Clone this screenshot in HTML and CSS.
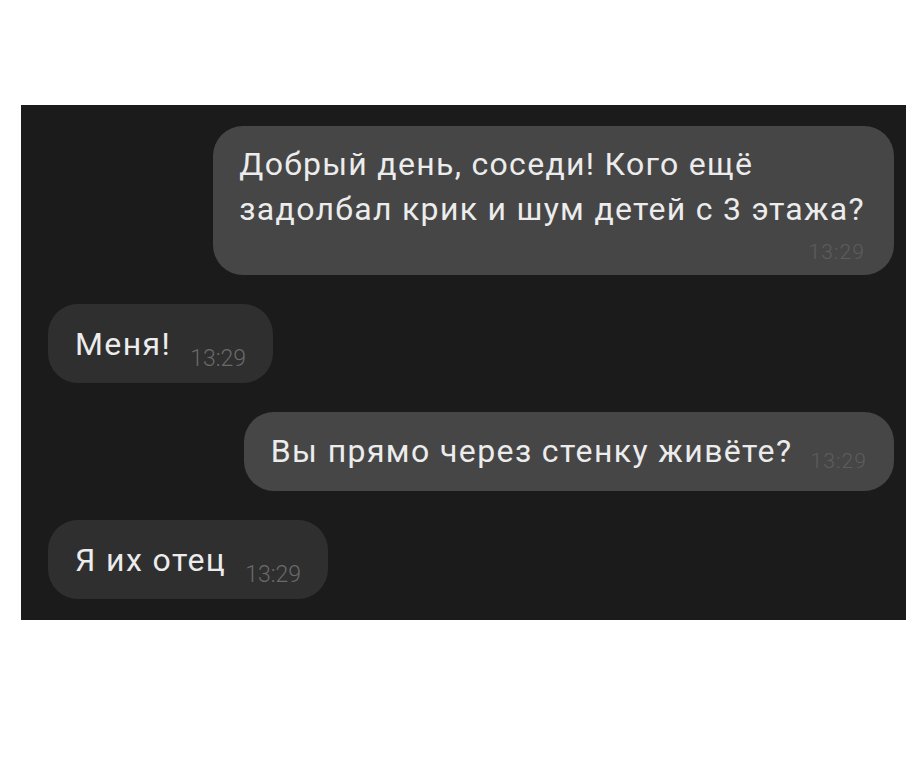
FILE: index.html
```html
<!DOCTYPE html>
<html lang="ru">
<head>
<meta charset="utf-8">
<link rel="stylesheet" href="styles.css">
</head>
<body>
<div class="chat">
  <div class="bubble out multi">
    <div class="text">Добрый день, соседи! Кого ещё<br>задолбал крик и шум детей с 3 этажа?</div>
    <div class="time">13:29</div>
  </div>
  <div class="bubble in">
    <span class="text">Меня!</span><span class="time">13:29</span>
  </div>
  <div class="bubble out">
    <span class="text">Вы прямо через стенку живёте?</span><span class="time">13:29</span>
  </div>
  <div class="bubble in">
    <span class="text">Я их отец</span><span class="time">13:29</span>
  </div>
</div>
</body>
</html>
```

FILE: styles.css
```css
html, body {
  margin: 0;
  padding: 0;
  background: #ffffff;
}

.chat {
  box-sizing: border-box;
  margin: 105px 0 0 21px;
  width: 885px;
  height: 515px;
  background: #1b1b1b;
  display: flex;
  flex-direction: column;
  gap: 29px;
  padding: 21px 12px 20px 27px;
  font-family: Roboto, "Noto Sans", sans-serif;
}

.bubble {
  box-sizing: border-box;
  display: flex;
  align-items: flex-start;
  height: 79px;
  border-radius: 30px;
}

.bubble.out {
  align-self: flex-end;
  background: #464646;
  padding: 17px 27px 0 27px;
}

.bubble.in {
  align-self: flex-start;
  background: #2f2f30;
  padding: 18px 27px 0 27px;
}

.text {
  color: #ececec;
  font-size: 32px;
  letter-spacing: 1.4px;
  line-height: 44px;
  white-space: nowrap;
}

.time {
  font-weight: 300;
  white-space: nowrap;
}

.bubble.in .time {
  font-size: 23px;
  line-height: 23px;
  margin: 25px 0 0 19px;
  color: #6a6a6a;
}

.bubble.out .time {
  font-size: 21px;
  line-height: 21px;
  letter-spacing: 1.1px;
  margin: 22px 0 0 18px;
  color: #5d5d5d;
}

.bubble.multi {
  flex-direction: column;
  align-items: stretch;
  height: 149px;
  padding: 16px 29px 0 26px;
}

.bubble.multi .text {
  letter-spacing: 1.3px;
  line-height: 45px;
}

.bubble.multi .time {
  align-self: flex-end;
  margin: 10px 0 0 0;
}
```
